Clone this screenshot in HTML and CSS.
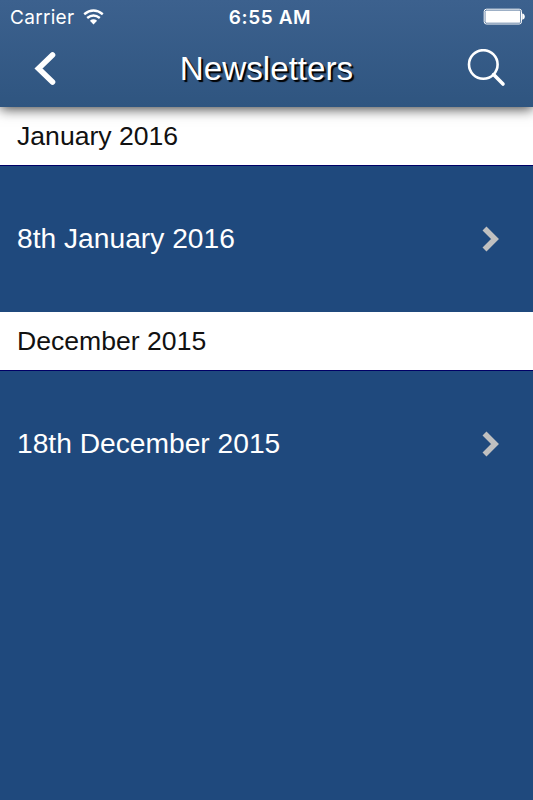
FILE: index.html
```html
<!DOCTYPE html>
<html lang="en">
<head>
    <meta charset="UTF-8">
    <meta name="viewport" content="width=device-width, initial-scale=1.0">
    <title>Newsletters</title>
    <link rel="stylesheet" href="styles.css">
</head>
<body>

<header class="header">
    <!-- Status bar -->
    <div class="status-bar">
        <div class="carrier">
            <span>Carrier</span>
            <svg class="wifi" width="21" height="16" viewBox="0 0 21 16">
                <path d="M1.2 5.2Q10.5-2.2 19.8 5.2" fill="none" stroke="#fff" stroke-width="2.4"/>
                <path d="M4.2 9Q10.5 3.8 16.8 9" fill="none" stroke="#fff" stroke-width="2.4"/>
                <path d="M6.9 11.7Q10.5 8.8 14.1 11.7L10.5 15.4Z" fill="#fff"/>
            </svg>
        </div>
        <div class="time">6:55 AM</div>
        <svg class="battery" width="42" height="18" viewBox="0 0 42 18">
            <rect x="1.2" y="1.2" width="37.3" height="14.8" rx="2.2" fill="none" stroke="#fff" stroke-width="1"/>
            <rect x="2.4" y="2.4" width="34.9" height="12.4" rx="0.8" fill="#fff"/>
            <path d="M39.2 5.4Q41.8 5.8 41.8 8.6Q41.8 11.4 39.2 11.8Z" fill="#fff"/>
        </svg>
    </div>

    <!-- Title bar -->
    <div class="title-bar">
        <button class="icon-button" type="button" aria-label="Back">
            <svg width="22" height="36" viewBox="0 0 22 36">
                <path d="M18.5 4L4.5 17.5L18.5 31" fill="none" stroke="#fff" stroke-width="5.6" stroke-linecap="round"/>
            </svg>
        </button>
        <h1 class="title">Newsletters</h1>
        <button class="icon-button" type="button" aria-label="Search">
            <svg width="40" height="40" viewBox="0 0 40 40">
                <circle cx="17.3" cy="15.5" r="14.3" fill="none" stroke="#fff" stroke-width="2.6"/>
                <path d="M27.6 25.6L37 35" fill="none" stroke="#fff" stroke-width="3.6" stroke-linecap="round"/>
            </svg>
        </button>
    </div>
</header>

<main class="list">
    <h2 class="section">January 2016</h2>
    <a class="row" href="#">
        <span>8th January 2016</span>
        <svg width="18" height="28" viewBox="0 0 18 28">
            <path d="M3.5 3.5L14 14L3.5 24.5" fill="none" stroke="#c0c0c0" stroke-width="5.6"/>
        </svg>
    </a>
    <h2 class="section">December 2015</h2>
    <a class="row" href="#">
        <span>18th December 2015</span>
        <svg width="18" height="28" viewBox="0 0 18 28">
            <path d="M3.5 3.5L14 14L3.5 24.5" fill="none" stroke="#c0c0c0" stroke-width="5.6"/>
        </svg>
    </a>
</main>

</body>
</html>
```
FILE: styles.css
```css
* {
    box-sizing: border-box;
}
body {
    margin: 0;
    height: 100vh;
    overflow: hidden;
    background-color: #1f497d;
    font-family: "Liberation Sans", Arial, sans-serif;
}
.header {
    position: relative;
    height: 107px;
    color: #fff;
    background: linear-gradient(#3c618e, #2f5580);
    box-shadow: 0 2px 12px rgba(0, 0, 0, 0.75);
}
.status-bar {
    display: grid;
    grid-template-columns: 1fr auto 1fr;
    align-items: center;
    height: 34px;
    padding: 0 8px 0 10px;
    font-family: Inter, "Liberation Sans", sans-serif;
    font-size: 19px;
}
.carrier {
    display: flex;
    align-items: center;
    gap: 9px;
    letter-spacing: 0.3px;
}
.time {
    padding-left: 5px;
    font-weight: 600;
    letter-spacing: 0.6px;
}
.battery {
    justify-self: end;
}
.title-bar {
    display: grid;
    grid-template-columns: 1fr auto 1fr;
    align-items: center;
    height: 69px;
    padding: 0 27px 0 34px;
}
.icon-button {
    display: flex;
    padding: 0;
    border: none;
    background: none;
}
.icon-button:last-child {
    justify-self: end;
}
.title {
    margin: 0 7px 0 0;
    font-size: 33.2px;
    font-weight: normal;
    text-shadow: 2px 2px 1px #000;
}
.section {
    display: flex;
    align-items: center;
    height: 59px;
    margin: 0;
    padding: 0 17px;
    border-bottom: 1px solid #000066;
    background-color: #fff;
    color: #111;
    font-size: 26.6px;
    font-weight: normal;
}
.row {
    display: flex;
    align-items: center;
    justify-content: space-between;
    height: 146px;
    padding: 0 34px 0 17px;
    background-color: #1f497d;
    color: #fff;
    font-size: 28.2px;
    text-decoration: none;
}
.row span {
    padding-bottom: 1px;
}
```
